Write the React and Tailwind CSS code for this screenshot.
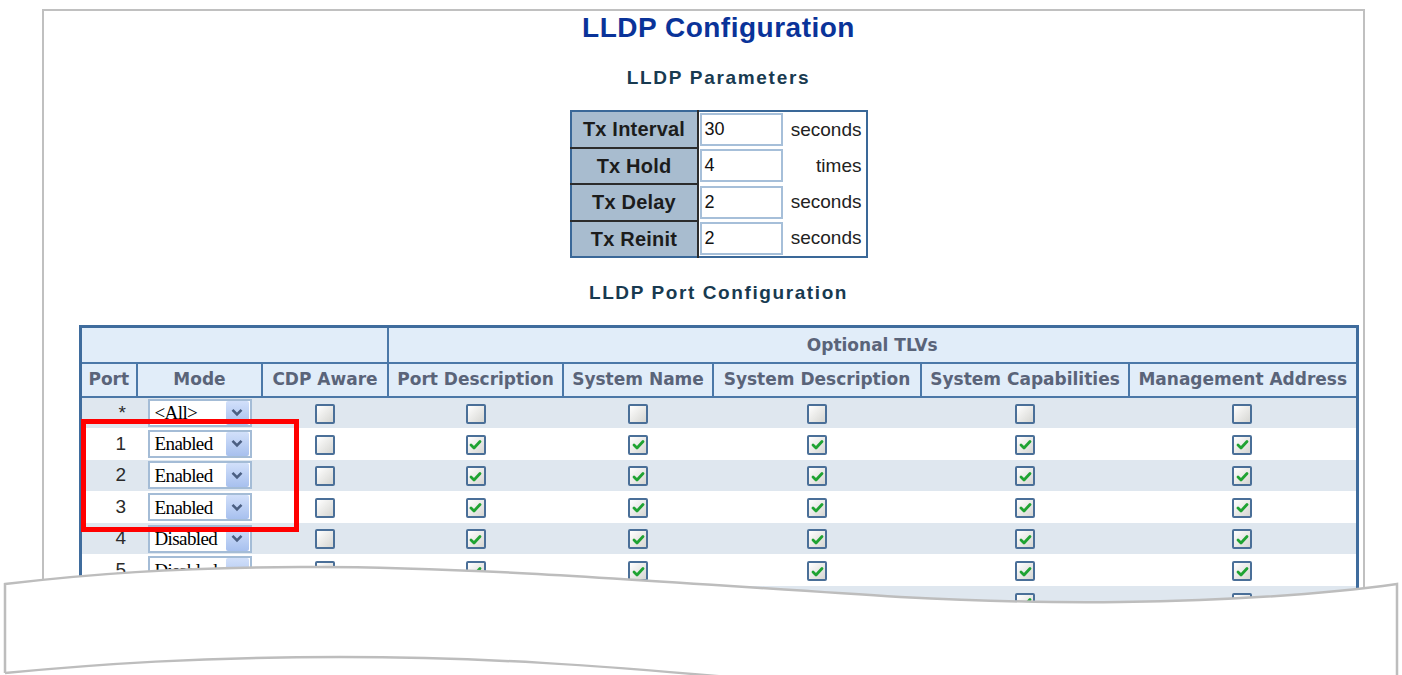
import React from 'react';

const PARAMS = [
  { label: 'Tx Interval', value: '30', unit: 'seconds' },
  { label: 'Tx Hold', value: '4', unit: 'times' },
  { label: 'Tx Delay', value: '2', unit: 'seconds' },
  { label: 'Tx Reinit', value: '2', unit: 'seconds' },
];

const PORTS = [
  { port: '*', mode: '<All>', tlv: false },
  { port: '1', mode: 'Enabled', tlv: true },
  { port: '2', mode: 'Enabled', tlv: true },
  { port: '3', mode: 'Enabled', tlv: true },
  { port: '4', mode: 'Disabled', tlv: true },
  { port: '5', mode: 'Disabled', tlv: true },
  { port: '6', mode: 'Disabled', tlv: true },
  { port: '7', mode: 'Disabled', tlv: true },
];

const TLV_COLUMNS = ['Port Description', 'System Name', 'System Description', 'System Capabilities', 'Management Address'];

const Checkbox = ({ checked }) => (
  <span className="inline-flex items-center justify-center w-[20px] h-[20px] border-2 border-[#4a6f98] rounded-[2px] bg-gradient-to-br from-white to-[#d6d6d2] align-middle">
    {checked && (
      <svg width="13" height="11" viewBox="0 0 13 11">
        <path d="M2 6 L5 9 L11 2.5" fill="none" stroke="#1fa332" strokeWidth="2.8" strokeLinecap="round" strokeLinejoin="round" />
      </svg>
    )}
  </span>
);

const ModeSelect = ({ value }) => (
  <div className="mx-auto flex items-center justify-between w-[104px] h-[28px] border-2 border-[#a4bcd6] bg-white pl-[5px] pr-[1px]">
    <span className="font-['Liberation_Serif',serif] text-[19px] leading-none text-black tracking-[-0.6px]">{value}</span>
    <span className="flex items-center justify-center w-[23px] h-[24px] rounded-[2px] bg-gradient-to-b from-[#d2e0fa] to-[#a7c0ee]">
      <svg width="12" height="9" viewBox="0 0 12 9">
        <polyline points="1.5,1.8 6,6.3 10.5,1.8" fill="none" stroke="#4b5f82" strokeWidth="2.6" />
      </svg>
    </span>
  </div>
);

export default function App() {
  return (
    <div className="relative w-[1402px] h-[675px] overflow-hidden bg-white">
      {/* page frame */}
      <div className="ml-[42px] mt-[9px] w-[1323px] h-[720px] border-2 border-[#c0c0c0]">
        <div className="ml-[36px] w-[1277px] flex flex-col items-center">
          <h1 className="mt-[3px] text-[28px] leading-[28px] font-bold text-[#0a3399] font-['Liberation_Sans',Arial,sans-serif] tracking-[0.5px]">
            LLDP Configuration
          </h1>

          <h2 className="mt-[26px] text-[19px] leading-[19px] font-bold text-[#183a50] font-['Liberation_Sans',Arial,sans-serif] tracking-[1.7px]">
            LLDP Parameters
          </h2>

          {/* parameters */}
          <table className="mt-[23px] border-collapse border-2 border-[#3a6898] font-['Liberation_Sans',Arial,sans-serif]">
            <tbody>
              {PARAMS.map((p, i) => (
                <tr key={p.label} className="h-[36.5px]">
                  <td className={`w-[127px] bg-[#a8bccf] border-r-2 border-[#2c2c2c] text-center text-[20px] font-bold text-[#1c1c1c] tracking-[0.2px] ${i < PARAMS.length - 1 ? 'border-b-2' : ''}`}>
                    {p.label}
                  </td>
                  <td className="w-[169px] bg-white p-0">
                    <div className="flex items-center justify-between pl-[1px] pr-[4px]">
                      <div className="w-[83px] h-[33px] border-2 border-[#a6bfd9] flex items-center pl-[3px] text-[18px] text-[#111]">
                        {p.value}
                      </div>
                      <span className="text-[19px] text-[#222]">{p.unit}</span>
                    </div>
                  </td>
                </tr>
              ))}
            </tbody>
          </table>

          <h2 className="mt-[25px] text-[19px] leading-[19px] font-bold text-[#183a50] font-['Liberation_Sans',Arial,sans-serif] tracking-[1.6px]">
            LLDP Port Configuration
          </h2>

          {/* port configuration */}
          <table className="mt-[23px] w-[1277px] table-fixed border-collapse border-[3px] border-[#3f6c9d]">
            <colgroup>
              <col className="w-[57px]" />
              <col className="w-[125px]" />
              <col className="w-[126px]" />
              <col className="w-[175px]" />
              <col className="w-[150px]" />
              <col className="w-[208px]" />
              <col className="w-[208px]" />
              <col className="w-[228px]" />
            </colgroup>
            <thead className="bg-[#e1edf9] font-['DejaVu_Sans',Verdana,sans-serif] text-[17px] font-bold text-[#5a6479]">
              <tr className="h-[36px]">
                <th colSpan={3} className="border-2 border-[#4b78a8]"></th>
                <th colSpan={5} className="border-2 border-[#4b78a8] font-bold pt-[2px]">Optional TLVs</th>
              </tr>
              <tr className="h-[34px]">
                <th className="border-2 border-[#4b78a8] font-bold whitespace-nowrap">Port</th>
                <th className="border-2 border-[#4b78a8] font-bold whitespace-nowrap">Mode</th>
                <th className="border-2 border-[#4b78a8] font-bold whitespace-nowrap">CDP Aware</th>
                {TLV_COLUMNS.map((c) => (
                  <th key={c} className="border-2 border-[#4b78a8] font-bold whitespace-nowrap">{c}</th>
                ))}
              </tr>
            </thead>
            <tbody className="font-['Liberation_Sans',Arial,sans-serif]">
              {PORTS.map((r, i) => (
                <tr key={r.port} className={`h-[31.6px] ${i % 2 === 0 ? 'bg-[#dfe7ef]' : 'bg-white'}`}>
                  <td className="text-right pr-[11px] text-[19px] text-[#2a2a2a] p-0">{r.port}</td>
                  <td className="p-0">
                    <ModeSelect value={r.mode} />
                  </td>
                  <td className="text-center p-0">
                    <Checkbox checked={false} />
                  </td>
                  {TLV_COLUMNS.map((c) => (
                    <td key={c} className="text-center p-0">
                      <Checkbox checked={r.tlv} />
                    </td>
                  ))}
                </tr>
              ))}
            </tbody>
          </table>
        </div>
      </div>

      {/* red highlight */}
      <div className="absolute left-[81px] top-[419px] w-[218px] h-[113px] border-[5px] border-[#ff0000]" />

      {/* torn paper edge */}
      <svg className="absolute inset-0 pointer-events-none" width="1402" height="675" viewBox="0 0 1402 675">
        <path
          d="M0,584 L5,584 C90,574 170,568 300,567 C480,566 700,585 900,597 C980,601 1050,603 1120,602 C1250,600 1340,592 1397,584 L1402,584 L1402,675 L0,675 Z"
          fill="#ffffff"
        />
        <path
          d="M5,673 L5,584 C90,574 170,568 300,567 C480,566 700,585 900,597 C980,601 1050,603 1120,602 C1250,600 1340,592 1397,584 L1397,700"
          fill="none"
          stroke="#bdbdbd"
          strokeWidth="2.5"
        />
        <path
          d="M5,673 C100,664 200,657 340,657 C480,657 600,665 760,680"
          fill="none"
          stroke="#bdbdbd"
          strokeWidth="2.5"
        />
      </svg>
    </div>
  );
}
